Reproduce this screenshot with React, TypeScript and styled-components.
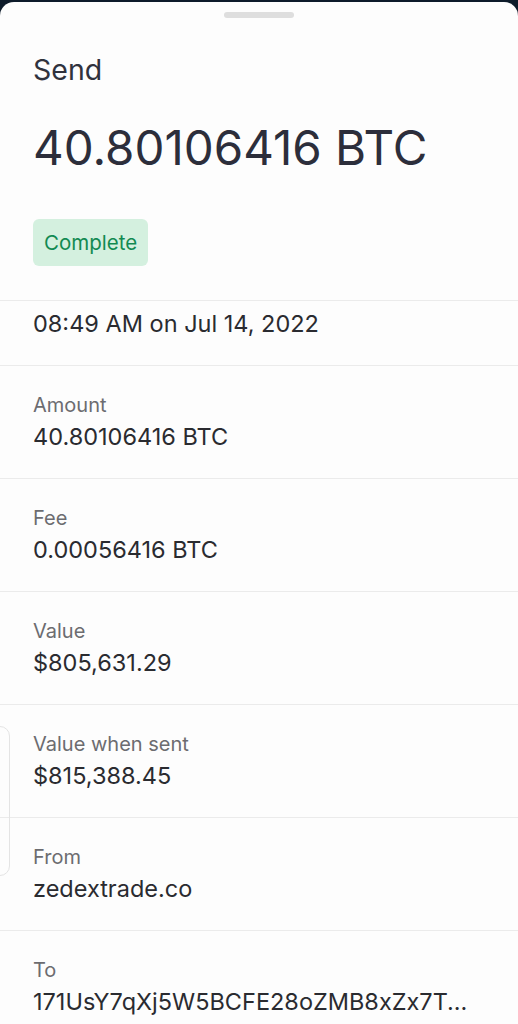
import React from 'react'
import styled, { createGlobalStyle } from 'styled-components'

const GlobalStyle = createGlobalStyle`
  html, body {
    margin: 0;
    padding: 0;
    background: #0d1b2a;
  }
  body {
    font-family: Inter, "Noto Sans", "Liberation Sans", sans-serif;
    -webkit-font-smoothing: antialiased;
  }
`

const Sheet = styled.div`
  position: relative;
  margin-top: 2px;
  height: 1022px;
  overflow: hidden;
  background: #fdfdfd;
  border-radius: 14px 14px 0 0;
`

const Handle = styled.div`
  width: 70px;
  height: 6px;
  margin: 10px auto 0;
  border-radius: 3px;
  background: #dedede;
`

const Header = styled.div`
  display: flex;
  flex-direction: column;
  align-items: flex-start;
  padding: 0 33px;
`

const Title = styled.div`
  margin-top: 35px;
  font-size: 28.5px;
  line-height: 34px;
  color: #30323d;
`

const BigAmount = styled.div`
  margin-top: 33px;
  font-size: 47.5px;
  line-height: 56px;
  color: #2c2e3b;
`

const Badge = styled.div`
  margin-top: 43px;
  padding: 0 11px;
  height: 47px;
  display: flex;
  align-items: center;
  border-radius: 6px;
  background: #d4f0df;
  color: #128a52;
  font-size: 20.5px;
`

const List = styled.div`
  margin-top: 34px;
`

const Row = styled.div<{ $compact?: boolean }>`
  box-sizing: border-box;
  border-top: 1.5px solid #ebebeb;
  padding: ${p => (p.$compact ? '9px' : '24.5px')} 33px 0;
  height: ${p => (p.$compact ? '65px' : '113px')};
  display: flex;
  flex-direction: column;
`

const Label = styled.div`
  font-size: 20px;
  line-height: 28px;
  color: #6c6c70;
`

const Value = styled.div`
  margin-top: 4px;
  font-size: 23.5px;
  line-height: 28px;
  color: #2a2b30;
  white-space: nowrap;
`

const DateText = styled(Value)`
  margin-top: 0;
`

const GhostCard = styled.div`
  position: absolute;
  left: -14px;
  top: 724px;
  width: 22px;
  height: 148px;
  border: 1.5px solid #e4e4e4;
  border-radius: 10px;
`

const rows = [
  { label: 'Amount', value: '40.80106416 BTC' },
  { label: 'Fee', value: '0.00056416 BTC' },
  { label: 'Value', value: '$805,631.29' },
  { label: 'Value when sent', value: '$815,388.45' },
  { label: 'From', value: 'zedextrade.co' },
  { label: 'To', value: '171UsY7qXj5W5BCFE28oZMB8xZx7T...' },
]

export default function App() {
  return (
    <>
      <GlobalStyle />
      <Sheet>
        <Handle />
        <Header>
          <Title>Send</Title>
          <BigAmount>40.80106416 BTC</BigAmount>
          <Badge>Complete</Badge>
        </Header>
        <List>
          <Row $compact>
            <DateText>08:49 AM on Jul 14, 2022</DateText>
          </Row>
          {rows.map(r => (
            <Row key={r.label}>
              <Label>{r.label}</Label>
              <Value>{r.value}</Value>
            </Row>
          ))}
        </List>
        <GhostCard />
      </Sheet>
    </>
  )
}
